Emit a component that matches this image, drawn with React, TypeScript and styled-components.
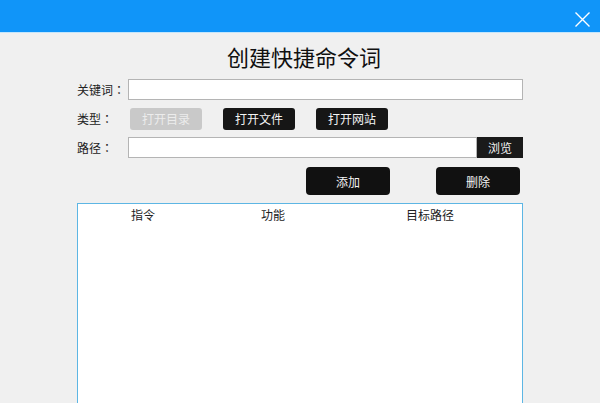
import * as React from "react";
import styled, { createGlobalStyle } from "styled-components";

const GlobalStyle = createGlobalStyle`
  html, body {
    margin: 0;
    padding: 0;
    background: #f0f0f0;
  }
  body {
    font-family: "Noto Sans CJK SC", "Noto Sans", "Liberation Sans", sans-serif;
    color: #1a1a1a;
  }
`;

const Window = styled.div`
  width: 600px;
  height: 403px;
  overflow: hidden;
  background: #f0f0f0;
  display: flex;
  flex-direction: column;
`;

const TitleBar = styled.div`
  height: 32px;
  flex-shrink: 0;
  background: #1095f9;
  border-bottom: 1px solid #c4e6fc;
  display: flex;
  justify-content: flex-end;
  align-items: flex-end;
  padding-right: 10px;
`;

const CloseButton = styled.button`
  width: 15px;
  height: 15px;
  margin-bottom: 5px;
  padding: 0;
  border: none;
  background: transparent;
  display: flex;
  cursor: pointer;
`;

const Body = styled.div`
  flex: 1;
  display: flex;
  flex-direction: column;
  padding: 0 77px;
  min-height: 0;
`;

const Heading = styled.h1`
  margin: 0;
  height: 46px;
  display: flex;
  align-items: center;
  justify-content: center;
  font-size: 22px;
  font-weight: 400;
  color: #111;
  padding-left: 8px;
`;

const FormRow = styled.div<{ $gap?: number }>`
  display: flex;
  align-items: center;
  height: 21px;
  margin-bottom: ${(p) => p.$gap ?? 8}px;
`;

const Label = styled.label`
  width: 51px;
  flex-shrink: 0;
  font-size: 12px;
  color: #222;
  white-space: nowrap;
`;

/* centred full-width colon, as the Windows font draws it */
const Colon = styled.span`
  font-family: "Noto Sans CJK TC", "Noto Sans CJK SC", sans-serif;
`;

const TextInput = styled.input`
  flex: 1;
  min-width: 0;
  height: 21px;
  box-sizing: border-box;
  border: 1px solid #b4b4b4;
  background: #fff;
  outline: none;
  padding: 0 4px;
  font-size: 12px;
`;

const TypeButtons = styled.div`
  display: flex;
  gap: 21px;
  margin-left: 2px;
`;

const TypeButton = styled.button<{ $active?: boolean }>`
  width: 72px;
  height: 22px;
  border: none;
  border-radius: 3px;
  background: ${(p) => (p.$active ? "#c9c9c9" : "#161616")};
  color: ${(p) => (p.$active ? "#ececec" : "#f4f4f4")};
  font-family: inherit;
  font-size: 12px;
  padding: 0;
  cursor: pointer;
`;

const BrowseButton = styled.button`
  width: 46px;
  height: 21px;
  border: none;
  background: #1a1a1a;
  color: #f2f2f2;
  font-family: inherit;
  font-size: 12px;
  padding: 0;
  cursor: pointer;
`;

const Actions = styled.div`
  display: flex;
  justify-content: flex-end;
  gap: 46px;
  padding-right: 3px;
  margin-bottom: 8px;
`;

const ActionButton = styled.button`
  width: 84px;
  height: 28px;
  border: none;
  border-radius: 4px;
  background: #111;
  color: #f4f4f4;
  font-family: inherit;
  font-size: 12px;
  padding: 0;
  cursor: pointer;
`;

const Table = styled.div`
  flex: 1;
  background: #fff;
  border: 1px solid #5db6e4;
  border-bottom: none;
`;

const HeaderRow = styled.div`
  display: grid;
  grid-template-columns: 130px 130px 1fr;
  height: 21px;
  align-items: center;
  font-size: 12px;
  color: #222;
`;

const HeaderCell = styled.div`
  text-align: center;
`;

export default function App() {
  return (
    <>
      <GlobalStyle />
      <Window>
        <TitleBar>
          <CloseButton aria-label="关闭">
            <svg width="15" height="15" viewBox="0 0 15 15">
              <path
                d="M0.5 0.5 L14.5 14.5 M14.5 0.5 L0.5 14.5"
                stroke="#fff"
                strokeWidth="1.4"
                fill="none"
              />
            </svg>
          </CloseButton>
        </TitleBar>
        <Body>
          <Heading>创建快捷命令词</Heading>
          <FormRow>
            <Label>
              关键词<Colon>：</Colon>
            </Label>
            <TextInput />
          </FormRow>
          <FormRow>
            <Label>
              类型<Colon>：</Colon>
            </Label>
            <TypeButtons>
              <TypeButton $active>打开目录</TypeButton>
              <TypeButton>打开文件</TypeButton>
              <TypeButton>打开网站</TypeButton>
            </TypeButtons>
          </FormRow>
          <FormRow $gap={9}>
            <Label>
              路径<Colon>：</Colon>
            </Label>
            <TextInput />
            <BrowseButton>浏览</BrowseButton>
          </FormRow>
          <Actions>
            <ActionButton>添加</ActionButton>
            <ActionButton>删除</ActionButton>
          </Actions>
          <Table>
            <HeaderRow>
              <HeaderCell>指令</HeaderCell>
              <HeaderCell>功能</HeaderCell>
              <HeaderCell>目标路径</HeaderCell>
            </HeaderRow>
          </Table>
        </Body>
      </Window>
    </>
  );
}
